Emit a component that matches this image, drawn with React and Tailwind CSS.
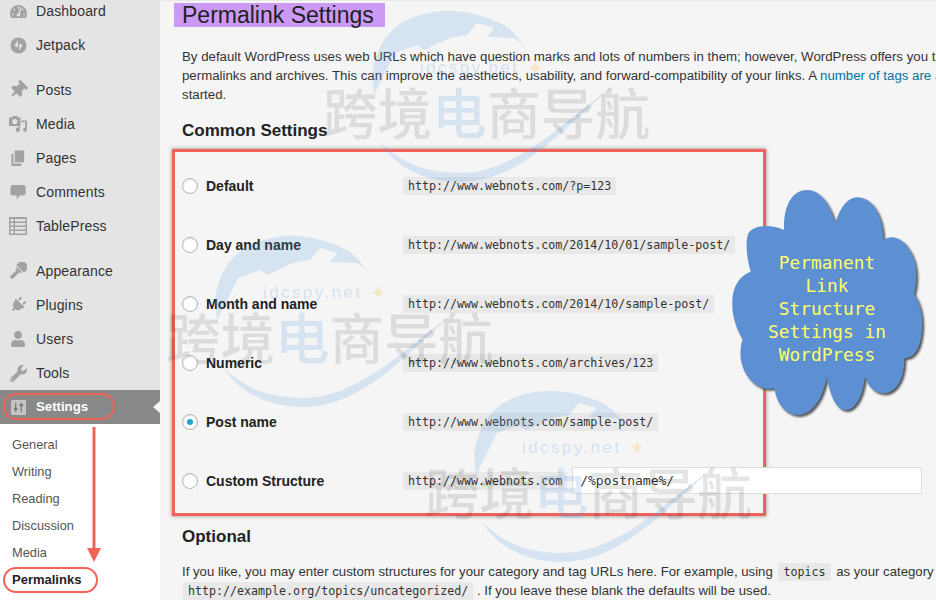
import { FaTachometerAlt, FaThumbtack, FaPlug, FaUser, FaWrench } from 'react-icons/fa';

const SANS = { fontFamily: '"Liberation Sans", Arial, sans-serif' };

function JetpackIcon() {
  return (
    <svg viewBox="0 0 18 18" className="w-[17px] h-[17px]" fill="currentColor">
      <path fillRule="evenodd" d="M9 0.5a8.5 8.5 0 1 0 0 17 8.5 8.5 0 0 0 0-17zM8.300 3.500v7.500L4.600 9.200zM9.700 7v7.500l3.700-5.700z" />
    </svg>
  );
}

function MediaIcon() {
  return (
    <svg viewBox="0 0 18 18" className="w-[18px] h-[18px]" fill="currentColor">
      <path fillRule="evenodd" d="M0 2.500h3l1-1.500h4l1 1.500h2.500v8.500H0zM5.800 4a2.600 2.600 0 1 0 0 5.200 2.600 2.600 0 0 0 0-5.200z" />
      <path d="M12.500 5.500H18v9.200a2 2 0 1 1-1.800-2V7.300h-3.700z" />
      <circle cx="8.800" cy="14.800" r="2.200" />
      <rect x="9.400" y="11.400" width="1.600" height="3.400" />
    </svg>
  );
}

function PagesIcon() {
  return (
    <svg viewBox="0 0 18 18" className="w-[17px] h-[17px]" fill="currentColor">
      <path d="M5 0.500h10v12.500H5z" />
      <path d="M1.500 4H3.600v10.400H12V17H1.500z" />
    </svg>
  );
}

function CommentIcon() {
  return (
    <svg viewBox="0 0 18 18" className="w-[16px] h-[18px]" fill="currentColor">
      <path d="M3 1h12a2.500 2.500 0 0 1 2.500 2.500v7A2.500 2.500 0 0 1 15 13h-4l-3.500 4.500V13H3A2.500 2.500 0 0 1 .5 10.500v-7A2.500 2.500 0 0 1 3 1z" />
    </svg>
  );
}

function TableIcon() {
  return (
    <svg viewBox="0 0 18 18" className="w-[18px] h-[18px]" fill="currentColor">
      <path fillRule="evenodd" d="M0 0h18v18H0zM1.500 2v2.500h3V2zM6 2v2.500h10.500V2zM1.500 6v2.500h3V6zM6 6v2.500h10.500V6zM1.500 10v2.500h3V10zM6 10v2.500h10.500V10zM1.500 14v2.500h3V14zM6 14v2.500h10.500V14z" />
    </svg>
  );
}

function BrushIcon() {
  return (
    <svg viewBox="0 0 18 18" className="w-[18px] h-[18px]" fill="currentColor">
      <g transform="rotate(45 9 9)">
        <rect x="3.500" y="-2" width="11" height="8" rx="0.500" />
        <rect x="5.500" y="6.800" width="7" height="2.200" />
        <path d="M7.200 9h3.600v8.500a1.800 1.800 0 0 1-3.600 0z" />
      </g>
    </svg>
  );
}

function SettingsIcon() {
  return (
    <svg viewBox="0 0 16 16" className="w-[15px] h-[15px]">
      <rect x="0" y="0" width="16" height="16" rx="1" fill="#c4c4c4" />
      <path d="M5 3v10M11 3v10" stroke="#777" strokeWidth="1.300" />
      <path d="M3 9.500h4M9 5.500h4" stroke="#777" strokeWidth="1.800" />
    </svg>
  );
}

const menuGroups = [
  [
    { label: 'Dashboard', icon: <FaTachometerAlt size={17} /> },
    { label: 'Jetpack', icon: <JetpackIcon /> },
  ],
  [
    { label: 'Posts', icon: <FaThumbtack size={18} className="rotate-45" /> },
    { label: 'Media', icon: <MediaIcon /> },
    { label: 'Pages', icon: <PagesIcon /> },
    { label: 'Comments', icon: <CommentIcon /> },
    { label: 'TablePress', icon: <TableIcon /> },
  ],
  [
    { label: 'Appearance', icon: <BrushIcon /> },
    { label: 'Plugins', icon: <FaPlug size={16} className="rotate-45" /> },
    { label: 'Users', icon: <FaUser size={16} /> },
    { label: 'Tools', icon: <FaWrench size={17} /> },
  ],
];

const submenu = ['General', 'Writing', 'Reading', 'Discussion', 'Media'];

const structures = [
  { label: 'Default', url: 'http://www.webnots.com/?p=123' },
  { label: 'Day and name', url: 'http://www.webnots.com/2014/10/01/sample-post/' },
  { label: 'Month and name', url: 'http://www.webnots.com/2014/10/sample-post/' },
  { label: 'Numeric', url: 'http://www.webnots.com/archives/123' },
  { label: 'Post name', url: 'http://www.webnots.com/sample-post/', checked: true },
  { label: 'Custom Structure', url: 'http://www.webnots.com', custom: true },
];

function Code({ children, className = '' }) {
  return (
    <code className={`inline-block shrink-0 bg-[#e8e8e8] px-[5px] h-[18px] leading-[18px] text-[11.65px] text-[#333] whitespace-nowrap font-['DejaVu_Sans_Mono',monospace] ${className}`}>
      {children}
    </code>
  );
}

function Sidebar() {
  return (
    <aside className="w-[160px] shrink-0 flex flex-col -mt-[6px] bg-[#e4e4e4] text-[14px] tracking-[0.15px] text-[#333]">
      {menuGroups.map((group, i) => (
        <div key={i} className="flex flex-col mb-[11px]">
          {group.map((item) => (
            <div key={item.label} className="flex items-center h-[34px] pl-[9px]">
              <span className="w-[18px] flex justify-center text-[#a2a2a2]">{item.icon}</span>
              <span className="ml-[9px]">{item.label}</span>
            </div>
          ))}
        </div>
      ))}
      <div className="relative flex items-center h-[34px] -mt-[11px] pl-[11px] bg-[#888] text-[13.2px] tracking-normal text-white font-bold shrink-0">
        <SettingsIcon />
        <span className="ml-[10px]">Settings</span>
        <span className="absolute right-0 top-[11px] border-y-[6px] border-y-transparent border-r-[7px] border-r-[#f5f5f5]" />
      </div>
      <div className="flex-1 bg-white pt-[7px] text-[12.8px] tracking-normal text-[#555]">
        {submenu.map((name) => (
          <div key={name} className="h-[27px] leading-[27px] pl-[12px]">{name}</div>
        ))}
        <div className="h-[27px] leading-[27px] pl-[12px] text-[13px] font-bold text-[#222]">Permalinks</div>
      </div>
    </aside>
  );
}

function Radio({ checked }) {
  return (
    <span className="w-[16px] h-[16px] shrink-0 rounded-full bg-white border border-[#b4b4b4] shadow-[inset_0_1px_2px_rgba(0,0,0,0.1)] flex items-center justify-center">
      {checked && <span className="w-[6px] h-[6px] rounded-full bg-[#21a0d2]" />}
    </span>
  );
}

function Cloud() {
  return (
    <div className="absolute left-[720px] top-[180px] w-[216px] h-[250px]">
      <svg viewBox="0 0 648 750" className="absolute inset-0 w-full h-full drop-shadow-[2px_2px_1px_#555]">
        <path
          fill="#5d8fd3"
          d="M192,150 C190,70 220,30 262,30 C305,30 335,85 346,130 C360,80 385,50 415,52 C460,55 490,110 490,180 C510,165 545,170 565,205 C590,240 595,290 582,342 C605,375 610,420 605,460 C600,510 580,535 553,535 C555,590 530,640 490,640 C465,640 445,620 435,592 C430,640 410,690 378,690 C345,690 330,640 320,592 C310,650 280,705 235,705 C195,705 170,670 163,625 C110,635 70,590 62,535 C60,510 63,490 68,478 C45,440 35,400 37,360 C40,310 65,285 92,275 C80,230 75,190 85,160 C100,135 150,130 192,150 Z"
        />
      </svg>
      <div className="absolute left-0 w-[214px] top-[71px] text-center text-[17.8px] leading-[23px] text-[#ffff66] font-['DejaVu_Sans_Mono',monospace]">
        <div>Permanent</div>
        <div>Link</div>
        <div>Structure</div>
        <div>Settings in</div>
        <div>WordPress</div>
      </div>
    </div>
  );
}

function Watermark({ className }) {
  return (
    <div className={`absolute w-[340px] h-[190px] pointer-events-none ${className}`}>
      <svg viewBox="0 0 340 190" className="absolute inset-0 w-full h-full overflow-visible">
        <path
          fill="#5a9be0"
          opacity="0.2"
          d="M47,63 C50,40 59,23 75,12 C85,5 102,0 118,-1 C135,-2 160,3 179,13 C190,20 198,32 205,43 C200,35 195,29 189,26 L162,25 L169,16 L152,11 L142,23 L125,26 L99,38 L92,33 L70,41 L59,63 L49,83 Z"
        />
        <path
          fill="#5a9be0"
          opacity="0.2"
          d="M55,130 C70,155 100,170 135,170 C175,170 210,145 239,118 L289,73 L239,112 C205,140 170,161 135,161 C100,161 75,150 55,130 Z"
        />
      </svg>
      <div className="absolute left-[95px] top-[46px] text-[17px] leading-[20px] tracking-[2.4px] text-[#b8d0ec]/55 whitespace-nowrap" style={SANS}>
        idcspy.net
      </div>
      <div className="absolute left-[202px] top-[44px] text-[20px] leading-[24px] text-[#f6e3b4]/70">✦</div>
      <div className="absolute -left-[2px] top-[67px] flex text-[54.5px] leading-[64px] font-medium text-black/10 whitespace-nowrap font-['Noto_Sans_CJK_SC',sans-serif]">
        <span>跨境</span>
        <span className="text-[#5a9be0]/20">电</span>
        <span>商导航</span>
      </div>
    </div>
  );
}

export default function App() {
  return (
    <div className="relative flex w-[936px] h-[600px] overflow-hidden bg-[#f5f5f5] text-[#333]" style={SANS}>
      <Sidebar />
      <main className="flex-1 min-w-0 pl-[22px] border-t border-[#e8e8e8]">
        <h1 className="-ml-[8px] mt-[2px] w-[211px] h-[24px] pl-[8px] bg-[#cc99f5] text-[23px] leading-[24px] text-[#222] whitespace-nowrap">
          Permalink Settings
        </h1>
        <div className="mt-[20px] text-[13.25px] leading-[19px] whitespace-nowrap">
          <p>By default WordPress uses web URLs which have question marks and lots of numbers in them; however, WordPress offers you the ability to create</p>
          <p>
            permalinks and archives. This can improve the aesthetics, usability, and forward-compatibility of your links. A{' '}
            <a className="text-[#0074a2]">number of tags are available</a>
          </p>
          <p>started.</p>
        </div>
        <h2 className="mt-[15px] text-[17px] leading-[24px] font-bold text-[#222]">Common Settings</h2>
        <div className="-ml-[10px] mt-[6px] w-[594px] h-[367px] pt-[4px] border-[3px] border-[#f0625a] shadow-[0_0_4px_rgba(0,0,0,0.45)]">
          {structures.map((row) => (
            <div key={row.label} className="flex items-center h-[59px] pl-[7px]">
              <Radio checked={row.checked} />
              <span className="ml-[8px] w-[197px] shrink-0 pt-[1px] text-[14px] font-bold text-[#222] whitespace-nowrap">{row.label}</span>
              <Code>{row.url}</Code>
              {row.custom && (
                <div className="ml-[5px] shrink-0 w-[350px] h-[27px] leading-[25px] pl-[7px] bg-white border border-[#ddd] text-[13px] text-[#333] font-['DejaVu_Sans_Mono',monospace]">
                  /%postname%/
                </div>
              )}
            </div>
          ))}
        </div>
        <h2 className="mt-[9px] text-[17px] leading-[24px] font-bold text-[#222]">Optional</h2>
        <div className="mt-[13px] text-[13.2px] leading-[19px] whitespace-nowrap">
          <p>
            If you like, you may enter custom structures for your category and tag URLs here. For example, using <Code className="mx-[2px]">topics</Code> as your category base would make
          </p>
          <p>
            <Code className="ml-[1px]">http://example.org/topics/uncategorized/</Code> . If you leave these blank the defaults will be used.
          </p>
        </div>
      </main>

      <Watermark className="left-[325px] top-[12px]" />
      <Watermark className="left-[168px] top-[237px]" />
      <Watermark className="left-[427px] top-[392px]" />
      <Cloud />

      {/* callouts drawn on top of the menu */}
      <div className="absolute left-[3px] top-[393px] w-[112px] h-[27px] rounded-full border-2 border-[#ef6456]" />
      <div className="absolute left-[3px] top-[567px] w-[95px] h-[26px] rounded-full border-2 border-[#ef6456]" />
      <svg className="absolute left-[84px] top-[425px] w-[20px] h-[140px]" viewBox="0 0 20 140">
        <path d="M10 2V125" stroke="#ef6456" strokeWidth="3" />
        <path d="M3 123H17L10 137Z" fill="#ef6456" />
      </svg>
    </div>
  );
}
